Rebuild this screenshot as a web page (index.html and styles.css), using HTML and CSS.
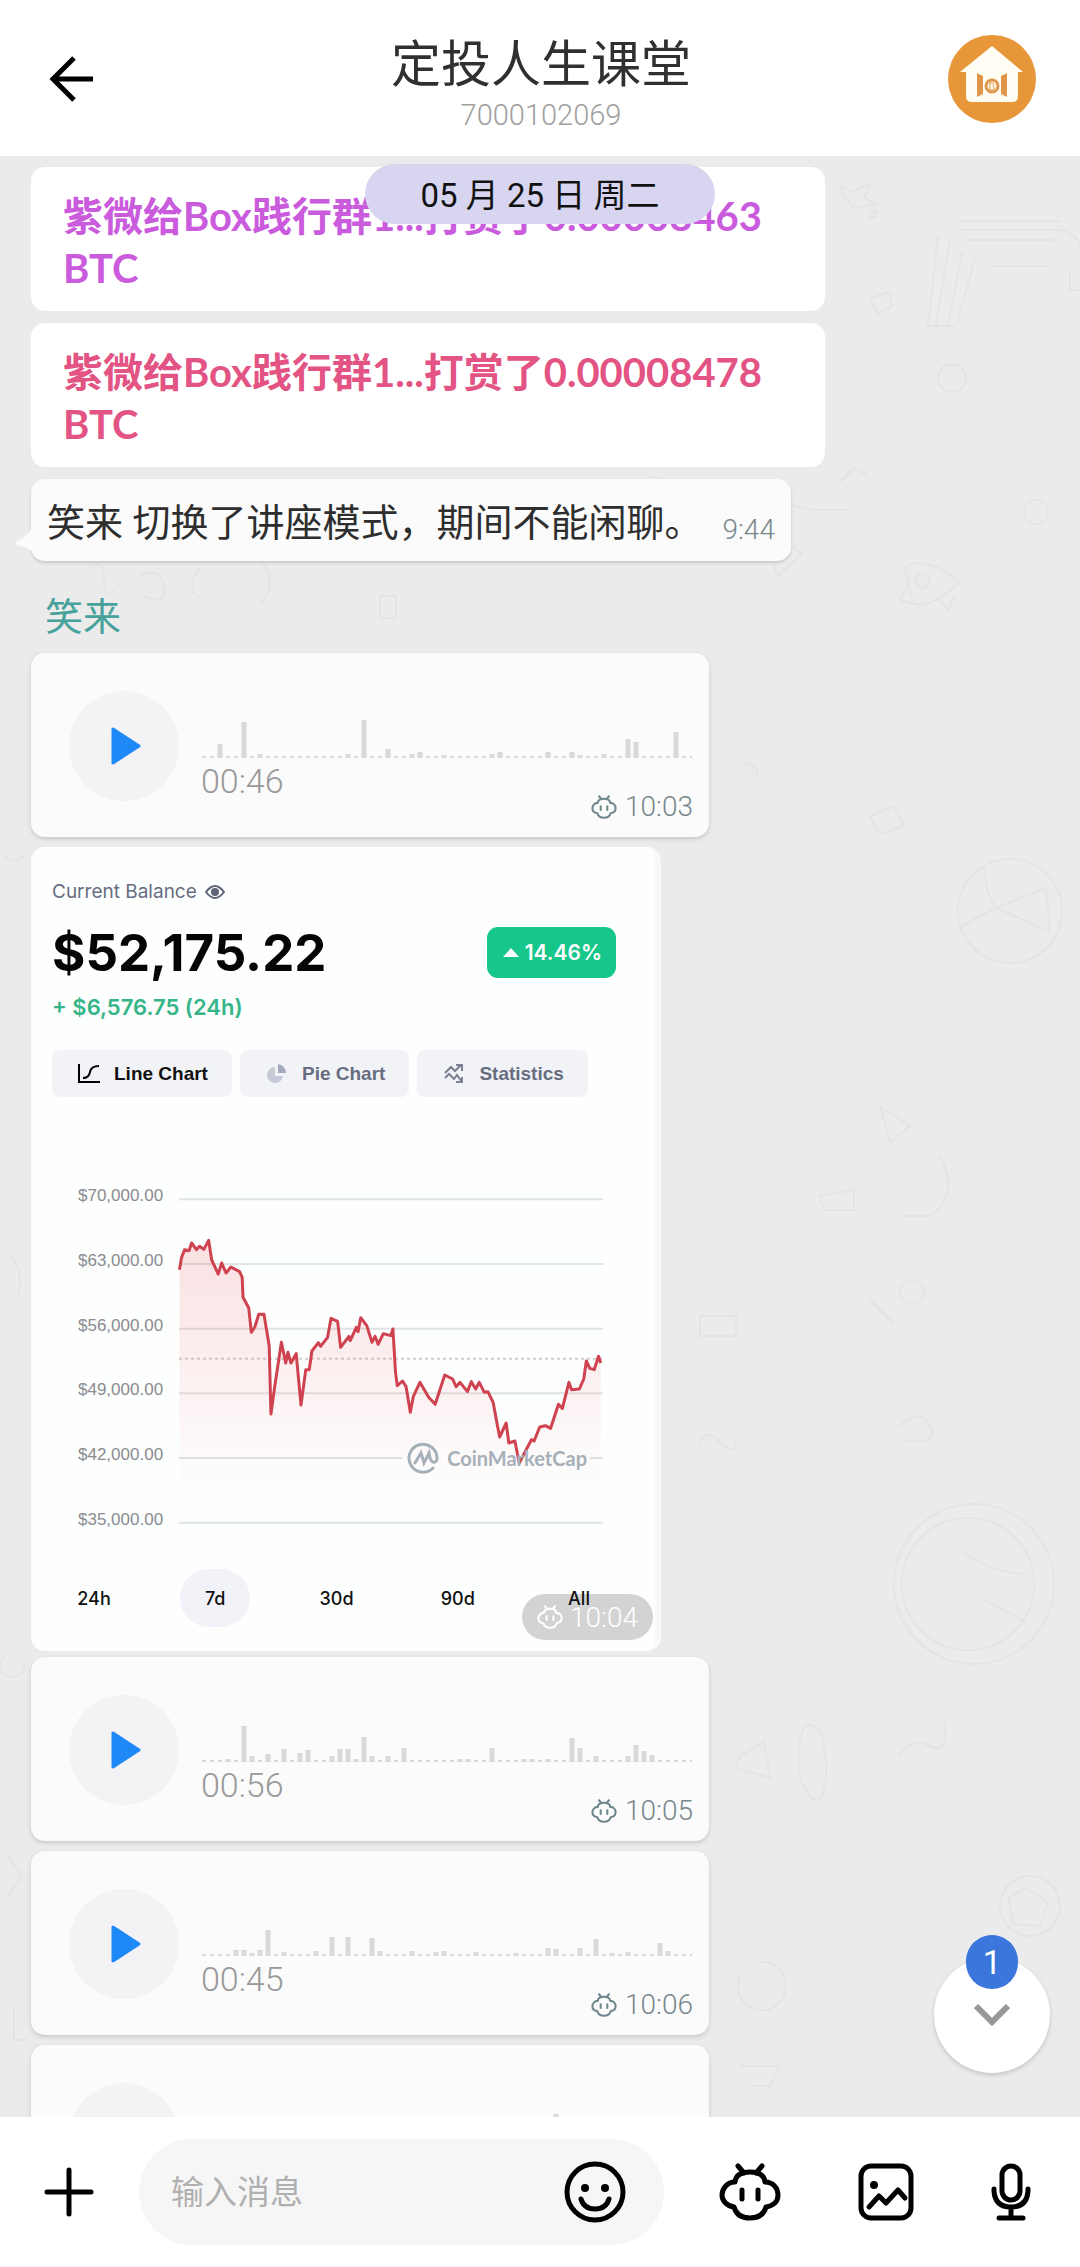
FILE: index.html
```html
<!DOCTYPE html>
<html lang="zh-CN">
<head>
<meta charset="utf-8">
<meta name="viewport" content="width=device-width, initial-scale=1">
<title>定投人生课堂</title>
<link rel="stylesheet" href="styles.css">
</head>
<body>
<svg class="defs" aria-hidden="true">
  <symbol id="pig" viewBox="0 0 62 58">
    <path d="M19 3l6 7M43 3l-6 7M16 19Q17 9 31 9T46 19C54 19 59 25 59 32S54 43 47 44Q44 55 31 55T15 44C8 43 3 38 3 32S8 19 16 19zM23 27v9M39 27v9" fill="none" stroke="currentColor" stroke-width="5" stroke-linecap="round" stroke-linejoin="round"/>
  </symbol>
</svg>

<div class="app">
  <header class="topbar">
    <button class="icon-button back" aria-label="返回">
      <svg viewBox="0 0 46 46" width="46" height="46" fill="none" stroke="#000" stroke-width="5"><path d="M44 23H5M25 2L4 23l21 21"/></svg>
    </button>
    <div class="room">
      <h1>定投人生课堂</h1>
      <p>7000102069</p>
    </div>
    <a class="avatar" href="#room" aria-label="群资料">
      <svg viewBox="0 0 88 88" width="88" height="88">
        <circle cx="44" cy="44" r="44" fill="#e8963a"/>
        <path d="M44 11L75 37H70V61q0 6-6 6H24q-6 0-6-6V37H12z" fill="#fffdf4"/>
        <path d="M29 38l6 3v18l-6 3zM59 38l-6 3v18l6 3z" fill="#e0964a"/>
        <circle cx="44" cy="51" r="6" fill="none" stroke="#e0964a" stroke-width="3"/>
        <path d="M42 47v8M42 48h3q2 1 0 3q3 2 0 4h-3" fill="none" stroke="#e0964a" stroke-width="1"/>
      </svg>
    </a>
  </header>

  <main class="chat">
    <svg class="doodles" viewBox="0 0 1080 1961" preserveAspectRatio="xMidYMin slice" aria-hidden="true">
      <path d="M960 65h100M960 74h100q20 4 20 20M965 84h90M990 110h60M938 80L928 170h28M950 84l-14 84M962 96l-14 74M975 102l-18 66M1070 114v20h12"/>
      <path d="M840 30l12 6 18-8-6 14 14 6-24 4-10-12zM870 142l20-6 2 14-14 8zM870 55h6v6h-6z"/>
      <path d="M905 412c10-10 36-4 54 14-16 16-30 24-46 22zM922 418a7 7 0 1 0 1 0M908 430l-8 14 12 4M940 444l8 10 6-14"/>
      <circle cx="952" cy="222" r="14"/><circle cx="1036" cy="356" r="12"/><path d="M780 338q10 16 40 16h30M724 358c-4-18 36-22 38 2M840 326l14-14 12 6"/>
      <circle cx="1010" cy="755" r="52"/><path d="M984 712q2 28 12 40l50-20M996 752l-38 20M1046 732l4 44-54-24M650 320q20 2 26 20"/>
      <path d="M770 398l20-10 12 10-24 22zM745 606q14 4 12 14M870 660l24-10 10 20-24 8z"/>
      <circle cx="968" cy="1428" r="66"/><circle cx="974" cy="1428" r="80"/><path d="M962 1396q30 20 60 22M985 1444l40 22"/>
      <circle cx="1030" cy="1750" r="30"/><path d="M1008 1742l18-10 22 14-8 24-26-2zM940 1000q20 40-10 60h-30M880 950l30 20-20 16zM700 1160h36v20h-36z"/>
      <circle cx="912" cy="1136" r="12"/><path d="M870 1144l24 24M820 1040l34-6v20h-30zM700 1290q4-20 20-4t16-4M900 1270q20-20 30 0t-26 14"/>
      <path d="M804 1570c-10 30-6 56 6 70s20-10 14-50q-4-26-20-20zM740 1600l24-14 6 36-34-10zM900 1600q10-20 30-10t14-26M740 1820a24 24 0 1 0 20-14M740 1910h40l-10 20h-20"/>
      <path d="M90 410q14-8 14 14t10 10M140 420q20-10 24 10t-20 10M200 412q-16 20 0 30M260 404q20 24 0 44M380 440h16v22h-16zM4 700q12 8 20 0M10 1100q14 12 8 40M4 1500a12 12 0 1 0 20 8M8 1700l14 20-14 20M14 1850v34h14"/>
    </svg>

    <article class="bubble tip tip-violet">紫微给Box践行群1...打赏了0.00008463 BTC</article>
    <article class="bubble tip tip-rose">紫微给Box践行群1...打赏了0.00008478 BTC</article>
    <article class="bubble notice">
      <svg class="tail" viewBox="0 0 18 28" width="18" height="28"><path d="M18 0Q14 12 0 17Q2 22 10 22Q14 23 18 28z" fill="#fcfcfc"/></svg>
      <span>笑来 切换了讲座模式，期间不能闲聊。</span>
      <time>9:44</time>
    </article>

    <h2 class="sender">笑来</h2>

    <article class="bubble voice">
      <button class="play" aria-label="播放"><svg viewBox="0 0 30 38" width="30" height="38"><path d="M2 2L28 19L2 36z" fill="#1e88f7" stroke="#1e88f7" stroke-width="3" stroke-linejoin="round"/></svg></button>
      <div class="track">
        <svg class="wave" viewBox="0 0 490 48" height="48"><path class="floor" d="M0 46H490"/><path class="bars" d="M18 47v-14M42 47v-36M58 47v-4M146 47v-4M162 47v-38M186 47v-9M210 47v-4M218 47v-6M242 47v-3M290 47v-4M298 47v-6M346 47v-6M370 47v-6M378 47v-3M402 47v-4M426 47v-19M434 47v-16M474 47v-26"/></svg>
        <span class="length">00:46</span>
      </div>
      <div class="meta"><svg width="26" height="24"><use href="#pig"/></svg><time>10:03</time></div>
    </article>

    <article class="bubble photo">
      <div class="balance-label">Current Balance
        <svg viewBox="0 0 20 14" width="20" height="14" fill="none" stroke="#5d6478" stroke-width="2"><path d="M1 7Q10-5 19 7Q10 19 1 7z"/><circle cx="10" cy="7" r="3" fill="#5d6478"/></svg>
      </div>
      <div class="balance-row">
        <strong>$52,175.22</strong>
        <span class="gain"><svg viewBox="0 0 16 9" width="16" height="9"><path d="M8 0L16 9H0z" fill="#fff"/></svg>14.46%</span>
      </div>
      <div class="change">+ $6,576.75 (24h)</div>
      <div class="tabs">
        <button class="tab active"><svg viewBox="0 0 22 20" width="22" height="20" fill="none" stroke="#000" stroke-width="2"><path d="M1 0V18H22M5 14Q11 14 12 8T21 2"/></svg>Line Chart</button>
        <button class="tab"><svg viewBox="0 0 22 20" width="22" height="20"><path d="M9 3a8 8 0 1 0 8 9H9z" fill="#c6cad8"/><path d="M12 0a9 9 0 0 1 8 9h-8z" fill="#a4aabd"/></svg>Pie Chart</button>
        <button class="tab"><svg viewBox="0 0 22 20" width="22" height="20" fill="none" stroke="#7c8294" stroke-width="2"><path d="M2 9l6-6 4 4 6-6M13 1h6v6M2 14l4-4 5 5 3-4 5 7M13 18h6v-5"/></svg>Statistics</button>
      </div>

      <div class="chart">
        <ol class="axis"><li>$70,000.00</li><li>$63,000.00</li><li>$56,000.00</li><li>$49,000.00</li><li>$42,000.00</li><li>$35,000.00</li></ol>
        <div class="plot">
          <svg class="curve" viewBox="417 120 973 972" preserveAspectRatio="none" role="img" aria-label="7d">
            <defs><linearGradient id="fade" x1="0" y1="0" x2="0" y2="1"><stop offset="0" stop-color="#ea3943" stop-opacity=".15"/><stop offset="1" stop-color="#ea3943" stop-opacity="0"/></linearGradient></defs>
            <path class="grid" d="M417 121H1390M417 315H1390M417 509H1390M417 703H1390M417 897H930M1360 897H1390M417 1091H1390"/>
            <path class="mid" d="M417 599H1390"/>
            <path fill="url(#fade)" d="M418 332L423 295L430 272L440 275L446 252L457 272L464 262L474 271L485 244L492 303L507 345L515 312L525 342L536 324L556 338L562 355L564 415L577 446L583 520L591 504L600 466L612 466L624 560L628 765L637 680L652 550L662 612L667 580L674 612L686 584L697 738L708 632L716 632L722 576L737 551L742 562L758 535L766 478L781 487L788 565L807 532L810 545L824 505L828 518L834 476L848 500L860 550L867 532L874 556L886 524L903 530L908 510L914 640L918 680L930 666L938 682L948 760L955 712L970 670L990 715L1005 736L1027 648L1045 660L1053 683L1062 670L1079 698L1088 668L1098 690L1106 670L1118 700L1126 698L1138 730L1148 800L1153 834L1168 792L1174 852L1188 846L1198 912L1226 842L1232 846L1245 804L1258 800L1270 808L1288 736L1297 748L1312 670L1318 692L1336 690L1346 660L1352 606L1360 628L1370 632L1380 592L1385 612V1000H418z"/>
            <path class="line" d="M418 332L423 295L430 272L440 275L446 252L457 272L464 262L474 271L485 244L492 303L507 345L515 312L525 342L536 324L556 338L562 355L564 415L577 446L583 520L591 504L600 466L612 466L624 560L628 765L637 680L652 550L662 612L667 580L674 612L686 584L697 738L708 632L716 632L722 576L737 551L742 562L758 535L766 478L781 487L788 565L807 532L810 545L824 505L828 518L834 476L848 500L860 550L867 532L874 556L886 524L903 530L908 510L914 640L918 680L930 666L938 682L948 760L955 712L970 670L990 715L1005 736L1027 648L1045 660L1053 683L1062 670L1079 698L1088 668L1098 690L1106 670L1118 700L1126 698L1138 730L1148 800L1153 834L1168 792L1174 852L1188 846L1198 912L1226 842L1232 846L1245 804L1258 800L1270 808L1288 736L1297 748L1312 670L1318 692L1336 690L1346 660L1352 606L1360 628L1370 632L1380 592L1385 612"/>
          </svg>
          <div class="watermark"><svg viewBox="0 0 32 32" width="32" height="32" fill="none" stroke="#a6b0b8" stroke-width="3" stroke-linecap="round"><path d="M26 26A14 14 0 1 1 30 16Q30 21 26 20Q23 19 22 11L17 21L14 11L8 21"/></svg><span>CoinMarketCap</span></div>
        </div>
      </div>

      <div class="ranges">
        <button>24h</button><button class="active">7d</button><button>30d</button><button>90d</button><button>All</button>
      </div>
      <div class="stamp"><svg width="26" height="24"><use href="#pig"/></svg><time>10:04</time></div>
    </article>

    <article class="bubble voice">
      <button class="play" aria-label="播放"><svg viewBox="0 0 30 38" width="30" height="38"><path d="M2 2L28 19L2 36z" fill="#1e88f7" stroke="#1e88f7" stroke-width="3" stroke-linejoin="round"/></svg></button>
      <div class="track">
        <svg class="wave" viewBox="0 0 490 48" height="48"><path class="floor" d="M0 46H490"/><path class="bars" d="M26 47v-3M42 47v-36M50 47v-6M66 47v-8M82 47v-13M98 47v-9M106 47v-12M130 47v-6M138 47v-13M146 47v-13M154 47v-3M162 47v-25M170 47v-6M186 47v-6M202 47v-14M258 47v-3M266 47v-3M290 47v-14M322 47v-3M330 47v-3M346 47v-3M370 47v-24M378 47v-14M394 47v-6M426 47v-6M434 47v-17M442 47v-11M450 47v-7"/></svg>
        <span class="length">00:56</span>
      </div>
      <div class="meta"><svg width="26" height="24"><use href="#pig"/></svg><time>10:05</time></div>
    </article>

    <article class="bubble voice">
      <button class="play" aria-label="播放"><svg viewBox="0 0 30 38" width="30" height="38"><path d="M2 2L28 19L2 36z" fill="#1e88f7" stroke="#1e88f7" stroke-width="3" stroke-linejoin="round"/></svg></button>
      <div class="track">
        <svg class="wave" viewBox="0 0 490 48" height="48"><path class="floor" d="M0 46H490"/><path class="bars" d="M34 47v-6M42 47v-6M50 47v-3M58 47v-6M66 47v-26M82 47v-4M114 47v-5M130 47v-19M146 47v-19M170 47v-18M178 47v-5M210 47v-5M234 47v-4M242 47v-5M274 47v-4M314 47v-3M346 47v-8M354 47v-7M378 47v-8M394 47v-17M410 47v-3M426 47v-4M458 47v-13M466 47v-5"/></svg>
        <span class="length">00:45</span>
      </div>
      <div class="meta"><svg width="26" height="24"><use href="#pig"/></svg><time>10:06</time></div>
    </article>

    <article class="bubble voice">
      <button class="play" aria-label="播放"></button>
      <div class="track">
        <svg class="wave" viewBox="0 0 490 48" height="48"><path class="bars" d="M354 47v-36"/></svg>
      </div>
    </article>

    <div class="date">05 月 25 日 周二</div>
    <button class="jump" aria-label="跳到最新消息">
      <span class="count">1</span>
      <svg viewBox="0 0 36 22" width="36" height="22" fill="none" stroke="#999" stroke-width="6"><path d="M2 2L18 18L34 2"/></svg>
    </button>
  </main>

  <footer class="composer">
    <button class="icon-button" aria-label="更多"><svg viewBox="0 0 50 50" width="50" height="50" stroke="#000" stroke-width="5" stroke-linecap="round"><path d="M25 3V47M3 25H47"/></svg></button>
    <div class="field">
      <input type="text" placeholder="输入消息" aria-label="输入消息">
      <button class="icon-button" aria-label="表情"><svg viewBox="0 0 62 62" width="62" height="62" fill="none" stroke="#000" stroke-width="5" stroke-linecap="round"><circle cx="31" cy="31" r="28"/><path d="M17 38Q20 48 31 48T45 38"/><circle cx="21" cy="27" r="4" fill="#000" stroke="none"/><circle cx="41" cy="27" r="4" fill="#000" stroke="none"/></svg></button>
    </div>
    <div class="tools">
      <button class="icon-button" aria-label="打赏"><svg width="62" height="58"><use href="#pig"/></svg></button>
      <button class="icon-button" aria-label="图片"><svg viewBox="0 0 56 58" width="56" height="58" fill="none" stroke="#000" stroke-width="5" stroke-linecap="round" stroke-linejoin="round"><rect x="3" y="3" width="50" height="52" rx="10"/><path d="M11 44L21 33L28 40L40 27L47 35"/><circle cx="16" cy="22" r="4" fill="#000" stroke="none"/></svg></button>
      <button class="icon-button" aria-label="语音"><svg viewBox="0 0 40 58" width="40" height="58" fill="none" stroke="#000" stroke-width="5" stroke-linecap="round"><rect x="11" y="3" width="18" height="34" rx="9"/><path d="M3 26V28Q4 44 20 44T37 28V26M20 44V54M8 55H32"/></svg></button>
    </div>
  </footer>
</div>
</body>
</html>
```
FILE: styles.css
```css
* { box-sizing: border-box; }
body, h1, h2, p, ol { margin: 0; padding: 0; }
body { font-family: Roboto, "Noto Sans CJK SC", sans-serif; color: #2e2e2e; background: #fff; }
button { border: 0; padding: 0; background: none; font: inherit; color: inherit; }
svg { display: block; flex: none; }
ol { list-style: none; }

.defs { position: absolute; width: 0; height: 0; }
.app { display: flex; flex-direction: column; height: 100vh; overflow: hidden; }

/* Top bar */
.topbar { display: grid; grid-template-columns: 88px 1fr 88px; align-items: center; height: 156px; padding: 2px 44px 0 49px; flex: none; }
.room { padding: 12px 3px 0 0; text-align: center; }
.room h1 { font-size: 50px; font-weight: 400; line-height: 60px; color: #303030; }
.room p { font-size: 29px; font-weight: 300; line-height: 40px; color: #a0a0a0; }
.avatar { display: block; }

/* Conversation */
.chat { position: relative; flex: 1; min-height: 0; overflow: hidden; display: flex; flex-direction: column; align-items: flex-start; padding: 11px 31px 0; background: #ebebeb; }
.doodles { position: absolute; left: 0; top: 0; width: 100%; fill: none; stroke: #e4e4e4; stroke-width: 2; }
.bubble { position: relative; flex: none; border-radius: 14px; background: #fbfbfb; }

.tip { width: 794px; max-width: 100%; margin-bottom: 12px; padding: 23px 32px 17px; background: #fff; font-family: Lato, "Noto Sans CJK SC", sans-serif; font-size: 40px; font-weight: 700; line-height: 52px; }
.tip-violet { color: #cb5bdd; }
.tip-rose { color: #e35484; }

.notice { display: flex; align-items: center; gap: 20px; height: 82px; padding: 6px 16px 0; box-shadow: 0 2px 3px #c8c8c8; font-size: 38px; line-height: 56px; white-space: nowrap; }
.notice time { padding-top: 14px; line-height: 40px; }
.tail { position: absolute; left: -16px; bottom: 8px; }
time { font-size: 28px; font-weight: 300; color: #77878c; }

.sender { position: relative; margin: 30px 0 10px 14px; font-size: 38px; font-weight: 400; line-height: 52px; color: #46a29b; }

.voice { display: grid; grid-template-columns: 110px 1fr; column-gap: 22px; width: 678px; max-width: 100%; height: 184px; margin-bottom: 10px; padding: 38px 16px 0 38px; box-shadow: 0 2px 4px #c8c8c8; }
.play { display: grid; place-items: center; width: 110px; height: 110px; padding-left: 4px; border-radius: 50%; background: #f3f2f5; }
.track { padding-top: 20px; }
.wave { width: 100%; }
.wave path { fill: none; stroke: #d9d9d9; }
.wave .floor { stroke-width: 2; stroke-dasharray: 4 4; }
.wave .bars { stroke-width: 5; }
.length { display: block; padding-top: 2px; font-size: 34px; font-weight: 300; line-height: 40px; color: #999; }
.meta { position: absolute; right: 16px; bottom: 14px; display: flex; align-items: center; gap: 8px; line-height: 32px; color: #6f868b; }

/* Shared portfolio screenshot */
.photo { width: 630px; max-width: 100%; height: 804px; margin-bottom: 6px; padding: 32px 45px 0 21px; background: #fdfefe; font-family: Inter, sans-serif; border-right: 6px solid #f9f9f9; }
.balance-label { display: flex; align-items: center; gap: 8px; font-size: 19px; line-height: 26px; color: #676d80; }
.balance-row { display: flex; align-items: center; justify-content: space-between; height: 64px; margin-top: 15px; }
.balance-row strong { font-size: 51px; font-weight: 700; color: #050505; }
.gain { display: flex; align-items: center; gap: 6px; height: 51px; margin-right: -6px; padding: 0 14px 0 16px; border-radius: 11px; background: #17c68a; font-size: 21px; font-weight: 600; color: #fff; }
.change { margin-top: 10px; font-size: 22px; font-weight: 600; line-height: 26px; color: #35b588; }
.tabs { display: flex; gap: 8px; margin-top: 30px; }
.tab { display: flex; align-items: center; gap: 14px; height: 47px; padding: 0 24px 0 26px; border-radius: 8px; background: #f2f3f7; font-family: "Liberation Sans", sans-serif; font-size: 19px; font-weight: 700; color: #676d80; white-space: nowrap; }
.tab.active { color: #111; }

.chart { display: flex; gap: 16px; margin: 102px 7px 0 26px; }
.axis { display: flex; flex-direction: column; justify-content: space-between; height: 348px; margin-top: -15px; font-family: "Liberation Sans", sans-serif; font-size: 17px; line-height: 24px; color: #8b8b90; }
.plot { position: relative; flex: 1; height: 324px; }
.curve { position: relative; width: 100%; height: 324px; overflow: visible; }
.curve path { vector-effect: non-scaling-stroke; }
.curve .grid { fill: none; stroke: #dfe3e1; stroke-width: 2; }
.curve .mid { fill: none; stroke: #d5cccc; stroke-width: 2; stroke-dasharray: 3 3; }
.curve .line { fill: none; stroke: #cf4250; stroke-width: 3; stroke-linejoin: round; }
.watermark { position: absolute; right: 16px; top: 243px; display: flex; align-items: center; gap: 8px; font-family: Lato, sans-serif; font-size: 20px; font-weight: 700; color: #a6b0b8; }

.ranges { position: relative; z-index: 1; display: flex; justify-content: space-between; margin: 37px -4px 0 7px; font-size: 18px; font-weight: 500; color: #111; }
.ranges button { width: 70px; height: 58px; border-radius: 29px; }
.ranges .active { background: #f2f3f8; }
.stamp { position: absolute; right: 2px; bottom: 11px; display: flex; align-items: center; gap: 7px; height: 46px; padding: 0 15px; border-radius: 23px; background: rgba(0, 0, 0, .17); font-family: Roboto, sans-serif; color: #fff; }
.stamp time { color: #fff; }

/* Overlays */
.date { position: absolute; left: 50%; top: 8px; transform: translateX(-50%); width: 350px; height: 60px; border-radius: 30px; background: #d7d5f0; font-size: 33px; line-height: 64px; text-align: center; white-space: nowrap; color: #111; }
.jump { position: absolute; right: 30px; bottom: 44px; display: grid; place-items: center; width: 116px; height: 116px; border-radius: 50%; background: #fff; box-shadow: 0 2px 4px #c4c4c4; }
.count { position: absolute; left: 32px; top: -22px; width: 52px; height: 54px; border-radius: 27px; background: #3b76dc; font-size: 33px; line-height: 56px; color: #fff; }

/* Message composer */
.composer { display: flex; align-items: center; flex: none; height: 150px; padding: 0 49px 0 44px; background: #fff; color: #000; }
.field { display: flex; align-items: center; flex: 1; min-width: 0; height: 106px; margin: 0 55px 0 45px; padding: 0 38px 0 32px; border-radius: 53px; background: #f6f6f6; }
.field input { flex: 1; min-width: 0; border: 0; outline: 0; padding: 0; background: none; font: inherit; font-size: 33px; }
.field input::placeholder { color: #b0b0b0; }
.tools { display: flex; align-items: center; gap: 77px; }
```
